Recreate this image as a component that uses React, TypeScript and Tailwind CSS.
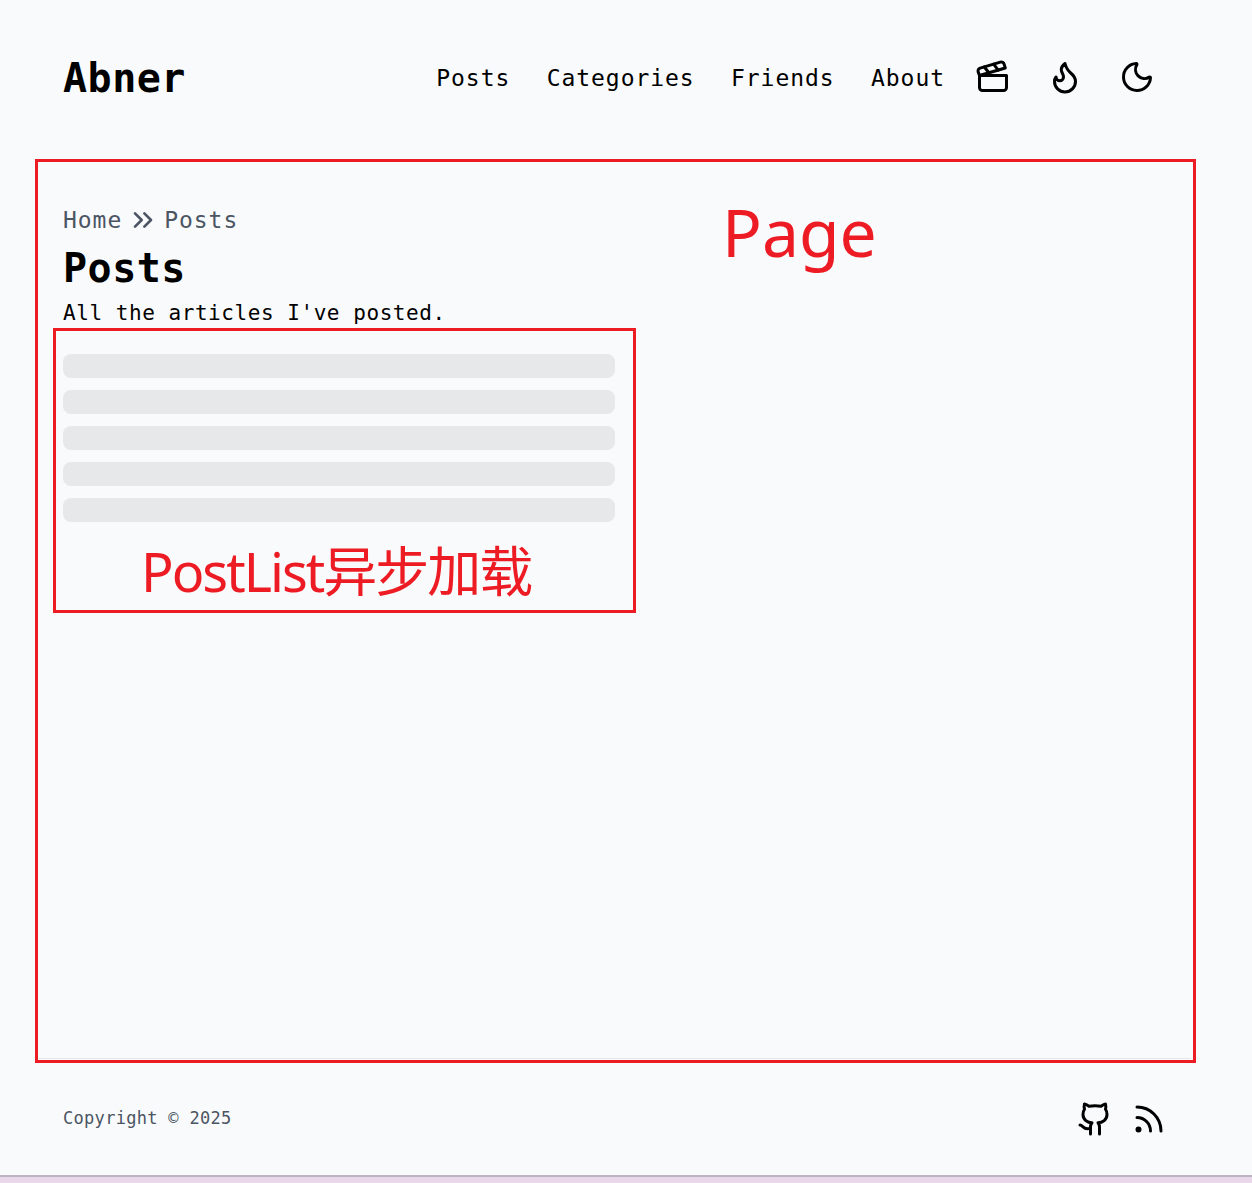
import { Clapperboard, Flame, Moon, Github, Rss, ChevronsRight } from "lucide-react";

const mono = "font-['DejaVu_Sans_Mono','Liberation_Mono',monospace]";
const cjk = "font-['Noto_Sans','Noto_Sans_CJK_SC',sans-serif]";

const links = ["Posts", "Categories", "Friends", "About"];

function Nav() {
  return (
    <header className="flex h-[157px] items-center justify-between pb-[4px] pl-[63px] pr-[97px]">
      <span className="pt-[2px] text-[40px] font-bold leading-none text-black tracking-[0.5px]">Abner</span>
      <nav className="flex items-center">
        <ul className="flex gap-[36.4px] pt-[3px] text-[23px] tracking-[0.95px] text-black">
          {links.map((l) => (
            <li key={l}>{l}</li>
          ))}
        </ul>
        <div className="ml-[30px] flex items-center gap-[36px]">
          <Clapperboard size={36} strokeWidth={2} className="text-black" />
          <Flame size={36} strokeWidth={2} className="text-black" />
          <Moon size={36} strokeWidth={2} className="text-black" />
        </div>
      </nav>
    </header>
  );
}

function Skeleton() {
  return (
    <div className="mt-[29px] flex w-[552px] flex-col gap-3">
      {[0, 1, 2, 3, 4].map((i) => (
        <div key={i} className="h-6 rounded-lg bg-[#e7e8ea]" />
      ))}
    </div>
  );
}

export default function App() {
  return (
    <div className={`${mono} relative flex h-[1183px] flex-col overflow-hidden bg-[#f9fafb]`}>
      <Nav />
      <main className="flex-1 pl-[63px] pt-[47px]">
        <div className="flex items-center text-[23px] leading-[30px] tracking-[0.95px] text-[#4b5563]">
          <span>Home</span>
          <ChevronsRight size={32} strokeWidth={2} className="ml-[5px] mr-[5px]" />
          <span>Posts</span>
        </div>
        <h1 className="mt-[10px] text-[40px] font-bold leading-[44px] tracking-[0.5px] text-black">Posts</h1>
        <p className="mt-[11px] text-[21px] leading-[24px] tracking-[0.55px] text-black">All the articles I've posted.</p>
        <Skeleton />
      </main>
      <footer className="ml-[38px] mr-[61px] flex h-[117px] items-center justify-between border-t border-[#e5e7eb] pl-[25px] pr-[24px]">
        <span className="pt-[4px] text-[17px] tracking-[0.3px] text-[#4b5563]">Copyright © 2025</span>
        <div className="flex items-center gap-[18px] pt-[4px]">
          <Github size={36} strokeWidth={2} className="text-black" />
          <Rss size={36} strokeWidth={2} className="text-black" />
        </div>
      </footer>
      <div className="h-[8px] border-t-2 border-[#bcb4c0] bg-[#e8d8ea]" />

      {/* annotations drawn on top of the screenshot */}
      <div className="absolute left-[35px] top-[159px] h-[904px] w-[1161px] border-[3px] border-[#ed1c24]" />
      <div className="absolute left-[53px] top-[328px] h-[285px] w-[583px] border-[3px] border-[#ed1c24]" />
      <span className={`${cjk} absolute left-[722px] top-[187px] text-[66px] leading-[88px] text-[#ed1c24]`}>Page</span>
      <span className={`${cjk} absolute left-[141px] top-[535px] text-[54px] leading-[72px] tracking-[-2px] text-[#ed1c24]`}>PostList异步加载</span>
    </div>
  );
}
